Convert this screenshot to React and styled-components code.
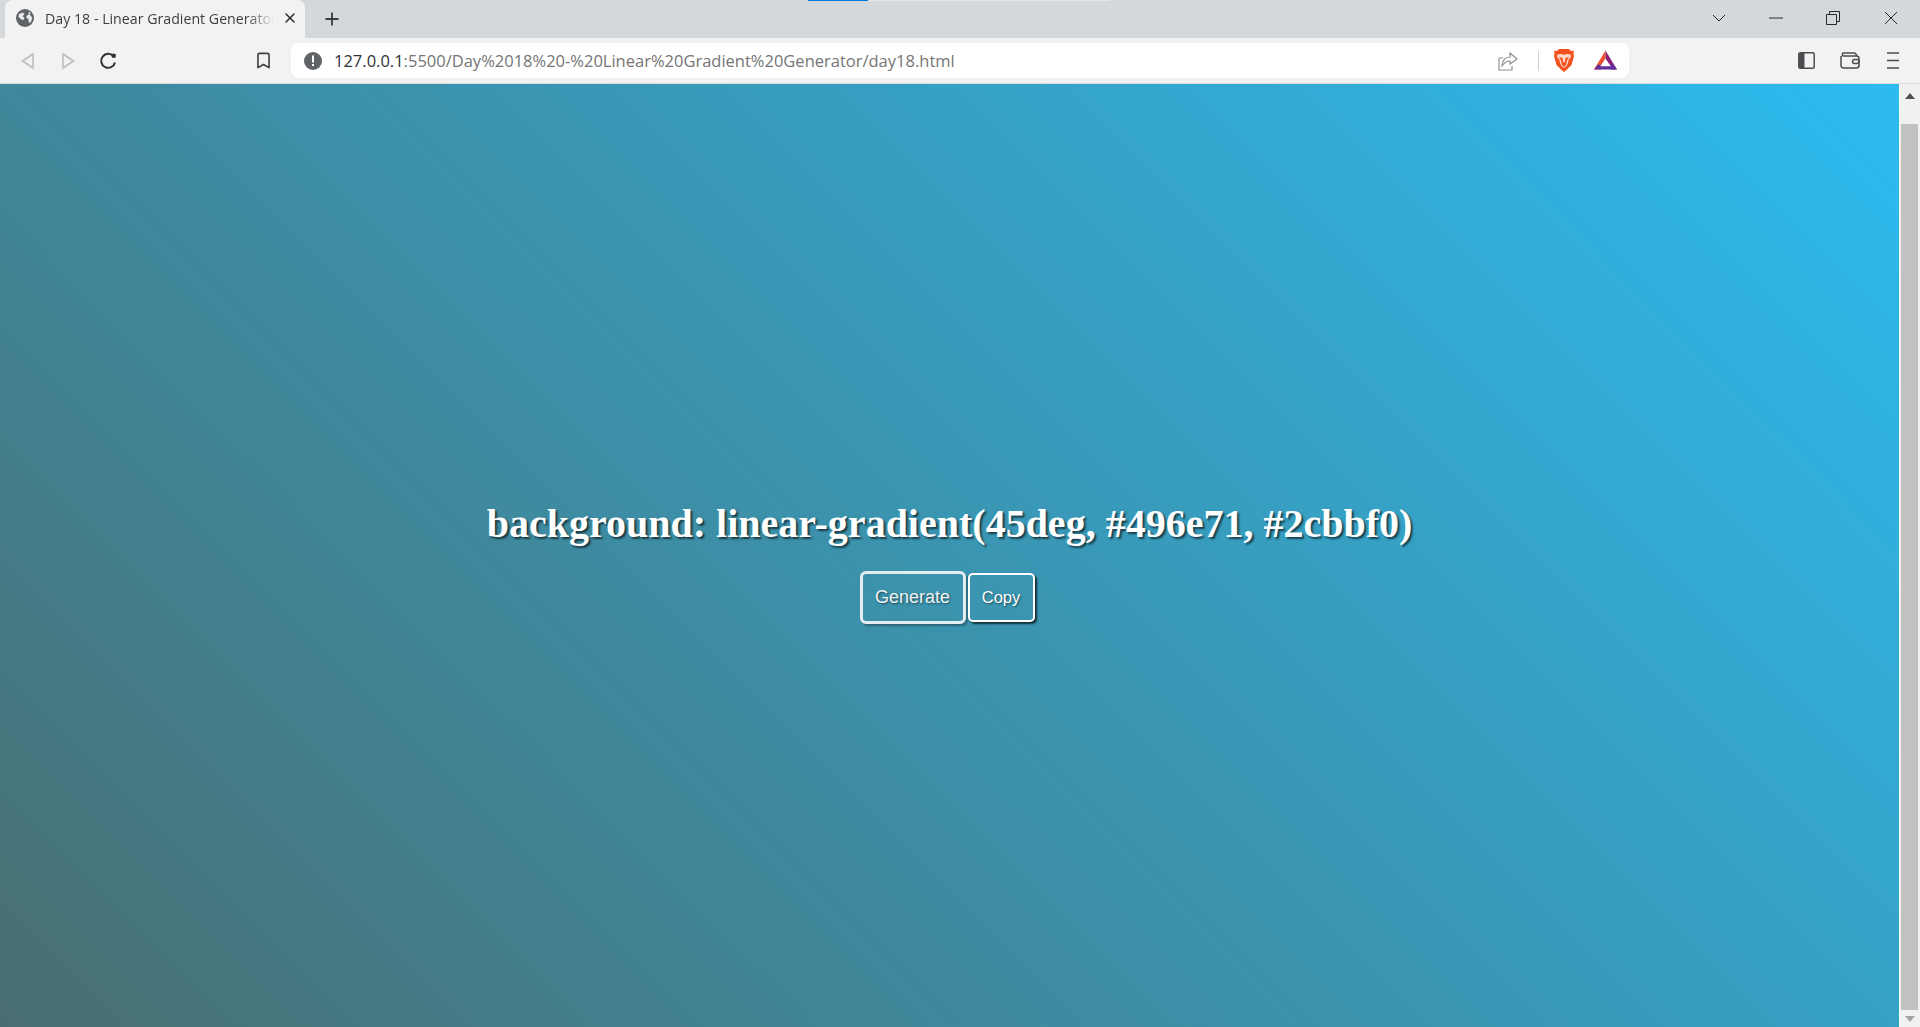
import React from "react";
import styled, { createGlobalStyle } from "styled-components";
import { X, Plus, Bookmark } from "lucide-react";

const Global = createGlobalStyle`
  html, body {
    margin: 0;
    height: 100%;
    overflow: hidden;
  }
  #root {
    height: 100%;
  }
`;

const Window = styled.div`
  display: flex;
  flex-direction: column;
  height: 1027px;
  font-family: "Open Sans", "Noto Sans", sans-serif;
`;

const TabStrip = styled.div`
  height: 38px;
  background: #d5d8db;
  display: flex;
  align-items: flex-end;
  padding-left: 5px;
  position: relative;
`;

const Tab = styled.div`
  width: 300px;
  height: 38px;
  box-sizing: border-box;
  background: #f2f2f2;
  border-radius: 8px 8px 0 0;
  display: flex;
  align-items: center;
  padding: 0 0 2px 11px;
  color: #3c4043;
  font-size: 14.2px;
`;

const TabTitle = styled.span`
  margin-left: 11px;
  width: 229px;
  white-space: nowrap;
  overflow: hidden;
  -webkit-mask-image: linear-gradient(to right, #000 88%, transparent 100%);
  mask-image: linear-gradient(to right, #000 88%, transparent 100%);
`;

const TabClose = styled.span`
  display: flex;
  margin-left: 8px;
  color: #2a2c2f;
`;

const NewTab = styled.span`
  display: flex;
  margin-left: 17px;
  margin-bottom: 9px;
  color: #3a3c40;
`;

// thin blue/grey line at the very top, a loading strip of the capture tool
const CaptureStrip = styled.div`
  position: absolute;
  top: 0;
  left: 808px;
  height: 1px;
  width: 302px;
  background: linear-gradient(to right, #0078d7 0 60px, #e6e6e6 60px);
`;

const WindowButtons = styled.div`
  margin-left: auto;
  height: 38px;
  box-sizing: border-box;
  padding-bottom: 2px;
  display: flex;
  align-items: center;
`;

const WindowButton = styled.span`
  width: ${(p) => p.$w}px;
  display: flex;
  justify-content: center;
  color: #26282b;
`;

const Toolbar = styled.div`
  height: 46px;
  box-sizing: border-box;
  background: #f2f2f2;
  border-bottom: 1px solid #d9dadc;
  display: flex;
  align-items: center;
`;

const NavGroup = styled.div`
  display: flex;
  align-items: center;
  width: 291px;
  padding: 0 8px;
  box-sizing: border-box;
  flex: none;
`;

const NavButton = styled.span`
  width: 40px;
  flex: none;
  display: flex;
  justify-content: center;
  color: ${(p) => (p.$off ? "#bcbdbf" : "#3a3c40")};
  margin-left: ${(p) => (p.$end ? "auto" : "0")};
`;

const Omnibox = styled.div`
  width: 1338px;
  height: 35px;
  background: #fff;
  border-radius: 8px;
  display: flex;
  align-items: center;
  padding-left: 13px;
  box-sizing: border-box;
  flex: none;
`;

const Url = styled.span`
  margin-left: 12px;
  font-size: 16.5px;
  color: #757575;
  white-space: nowrap;
`;

const UrlHost = styled.span`
  color: #2f3134;
`;

const OmniRight = styled.div`
  margin-left: auto;
  display: flex;
  align-items: center;
  padding-right: 12px;
`;

const Divider = styled.span`
  width: 1px;
  height: 20px;
  background: #cfd0d2;
  margin: 0 15px 0 20px;
`;

const ShieldSlot = styled.span`
  display: flex;
  margin-right: 20px;
`;

const ToolRight = styled.div`
  flex: 1;
  display: flex;
  align-items: center;
  justify-content: flex-end;
  padding-right: 6px;
  color: #4a4c50;
`;

const ToolSlot = styled.span`
  width: 43px;
  display: flex;
  justify-content: center;
`;

const Viewport = styled.div`
  flex: 1;
  display: flex;
  min-height: 0;
`;

const Page = styled.main`
  flex: 1;
  background: linear-gradient(45deg, #496e71, #2cbbf0);
  display: flex;
  flex-direction: column;
  align-items: center;
  padding-top: 417px;
`;

const Heading = styled.h1`
  margin: 0 0 24px;
  font-family: "Liberation Serif", "Times New Roman", serif;
  font-size: 40px;
  line-height: 46px;
  font-weight: 700;
  color: #fff;
  text-shadow: 2px 2px 2px rgba(0, 0, 0, 0.6);
`;

const Buttons = styled.div`
  display: flex;
  align-items: center;
  gap: 2px;
  margin-left: -5px;
`;

const Button = styled.button`
  font-family: "Liberation Sans", Arial, sans-serif;
  font-size: ${(p) => (p.$active ? 18 : 16.5)}px;
  width: ${(p) => (p.$active ? 106 : 67)}px;
  height: ${(p) => (p.$active ? 53 : 49)}px;
  padding: 0;
  color: ${(p) => (p.$active ? "#eef3f5" : "#fff")};
  background: transparent;
  border: ${(p) => (p.$active ? "3px solid #e3ecef" : "2px solid #fff")};
  border-radius: ${(p) => (p.$active ? 6 : 5)}px;
  box-shadow: 2px 2px 2px rgba(0, 0, 0, ${(p) => (p.$active ? 0.3 : 0.7)});
  text-shadow: 1px 1px 2px rgba(0, 0, 0, 0.5);
`;

const Scrollbar = styled.div`
  width: 21px;
  background: #f1f1f1;
  display: flex;
  flex-direction: column;
  align-items: center;
  border-left: 1px solid #f8f8f8;
  padding-right: 1px;
  box-sizing: border-box;
`;

const Arrow = styled.div`
  height: ${(p) => p.$h}px;
  flex: none;
  display: flex;
  justify-content: center;
  padding-top: ${(p) => p.$pt}px;
  box-sizing: border-box;
`;

const Thumb = styled.div`
  width: 17px;
  flex: 1;
  background: #c1c1c1;
`;

function Globe() {
  return (
    <svg width="18" height="18" viewBox="0 0 18 18">
      <circle cx="9" cy="9" r="9" fill="#5f6368" />
      <path d="M3 5 7 3.500 8.500 5.500 6.500 7 8.500 9 7.500 11 5.500 10.500 2.500 8ZM13 2.500 14.500 4 13.500 5.500 15.500 7.500 16 9 15.500 12 13.500 14 12.500 12.500 12.500 10 10.500 9 10.500 7 12.500 5.500Z" fill="#e9eaeb" />
    </svg>
  );
}

function AlertDot() {
  return (
    <svg width="18" height="18" viewBox="0 0 18 18">
      <circle cx="9" cy="9" r="9" fill="#5f6368" />
      <rect x="8" y="3.500" width="2" height="7" fill="#fff" />
      <rect x="8" y="12" width="2" height="2" fill="#fff" />
    </svg>
  );
}

function Triangle({ flip }) {
  return (
    <svg width="14" height="18" viewBox="0 0 14 18" fill="none" stroke="currentColor" strokeWidth="1.6">
      <path d={flip ? "M2 2 12.500 9 2 16Z" : "M12 2 1.500 9 12 16Z"} />
    </svg>
  );
}

function Reload() {
  return (
    <svg width="18" height="18" viewBox="0 0 18 18" fill="none">
      <path d="M14.500 4.200A7 7 0 1 0 16 10.500" stroke="#303236" strokeWidth="2" />
      <circle cx="14.700" cy="3.800" r="2.300" fill="#303236" />
    </svg>
  );
}

function Share() {
  return (
    <svg width="20" height="20" viewBox="0 0 20 20" fill="none" stroke="#8e9094" strokeWidth="1.2">
      <path d="M5 7H1v12h13v-4" />
      <path d="M12 2l7 6-7 5V10C8 10 6 12 4 15 4 10 7 6 12 6Z" />
    </svg>
  );
}

function BraveLion() {
  return (
    <svg width="20" height="23" viewBox="0 0 20 23">
      <path d="M5 0h10l2 2 3-.2-.6 3L20 7l-2.500 9-4 4L10 23l-3.500-3-4-4L0 7l.6-2.200L0 1.800 3 2Z" fill="#f4511e" />
      <path d="M3.500 5.500 7 5l3 .8 3-.8 3.500.5.500 2.500-2.500 3-.5 3-1.500 3-2.500 2-2.500-2-1.500-3-.5-3L3 8Z" fill="#ffd9cb" />
      <path d="M5 8l3.500 1 .7 4 .8.800.8-.800.7-4L15 8l-2 3.500-.8 4L10 18l-2.200-2.500-.8-4Z" fill="#f4511e" />
    </svg>
  );
}

function BatTriangle() {
  return (
    <svg width="23" height="21" viewBox="0 0 24 21">
      <path d="M12 0 0 20h7.500L12 12.500Z" fill="#f0512f" />
      <path d="M12 0 24 20h-6.500L12 10Z" fill="#8b2079" />
      <path d="M0 20 4 15h16l4 5Z" fill="#62309a" />
      <path d="M12 8.500 17.500 16.500h-11Z" fill="#fff" />
    </svg>
  );
}

function SidePanel() {
  return (
    <svg width="17" height="17" viewBox="0 0 17 17">
      <rect x=".8" y=".8" width="15.400" height="15.400" rx="1.500" fill="none" stroke="currentColor" strokeWidth="1.500" />
      <rect x="1" y="1" width="5.500" height="15" fill="currentColor" />
    </svg>
  );
}

function Wallet() {
  return (
    <svg width="20" height="17" viewBox="0 0 20 17" fill="none" stroke="currentColor" strokeWidth="1.500">
      <path d="M1 4V13.500a2.500 2.500 0 0 0 2.500 2.500H16.500a2.500 2.500 0 0 0 2.500-2.500V6.500A2.500 2.500 0 0 0 16.500 4H3a2 2 0 0 1 0-3H14a2.500 2.500 0 0 1 2.500 3" />
      <rect x="12.500" y="7.500" width="6.500" height="4" rx="2" />
    </svg>
  );
}

function Menu() {
  return (
    <svg width="12" height="17" viewBox="0 0 12 17" stroke="currentColor" strokeWidth="1.500">
      <path d="M0 1h12M0 8.500h12M0 16h12" />
    </svg>
  );
}

function App() {
  return (
    <Window>
      <Global />
      <TabStrip>
        <CaptureStrip />
        <Tab>
          <Globe />
          <TabTitle>Day 18 - Linear Gradient Generator</TabTitle>
          <TabClose><X size={16} strokeWidth={2.2} /></TabClose>
        </Tab>
        <NewTab><Plus size={20} strokeWidth={2.2} /></NewTab>
        <WindowButtons>
          <WindowButton $w={58}>
            <svg width="14" height="8" viewBox="0 0 14 8" fill="none" stroke="currentColor"><path d="M1 1l6 6 6-6" /></svg>
          </WindowButton>
          <WindowButton $w={56}>
            <svg width="14" height="2" viewBox="0 0 14 2" stroke="currentColor"><path d="M0 1h14" /></svg>
          </WindowButton>
          <WindowButton $w={58}>
            <svg width="14" height="14" viewBox="0 0 14 14" fill="none" stroke="currentColor"><path d="M.5 3.500h10v10H.5zM3.500 3.500V.5h10v10h-3" /></svg>
          </WindowButton>
          <WindowButton $w={58}>
            <svg width="14" height="14" viewBox="0 0 14 14" fill="none" stroke="currentColor"><path d="M1 1l12 12M13 1 1 13" /></svg>
          </WindowButton>
        </WindowButtons>
      </TabStrip>
      <Toolbar>
        <NavGroup>
          <NavButton $off><Triangle /></NavButton>
          <NavButton $off><Triangle flip /></NavButton>
          <NavButton><Reload /></NavButton>
          <NavButton $end><Bookmark size={19} strokeWidth={2} /></NavButton>
        </NavGroup>
        <Omnibox>
          <AlertDot />
          <Url><UrlHost>127.0.0.1</UrlHost>:5500/Day%2018%20-%20Linear%20Gradient%20Generator/day18.html</Url>
          <OmniRight>
            <Share />
            <Divider />
            <ShieldSlot><BraveLion /></ShieldSlot>
            <BatTriangle />
          </OmniRight>
        </Omnibox>
        <ToolRight>
          <ToolSlot><SidePanel /></ToolSlot>
          <ToolSlot><Wallet /></ToolSlot>
          <ToolSlot><Menu /></ToolSlot>
        </ToolRight>
      </Toolbar>
      <Viewport>
        <Page>
          <Heading>background: linear-gradient(45deg, #496e71, #2cbbf0)</Heading>
          <Buttons>
            <Button $active>Generate</Button>
            <Button>Copy</Button>
          </Buttons>
        </Page>
        <Scrollbar>
          <Arrow $h={40} $pt={9}>
            <svg width="10" height="6" viewBox="0 0 10 6"><path d="M5 0l5 6H0z" fill="#505050" /></svg>
          </Arrow>
          <Thumb />
          <Arrow $h={17} $pt={6}>
            <svg width="10" height="6" viewBox="0 0 10 6"><path d="M5 6l5-6H0z" fill="#a3a3a3" /></svg>
          </Arrow>
        </Scrollbar>
      </Viewport>
    </Window>
  );
}

export default App;
